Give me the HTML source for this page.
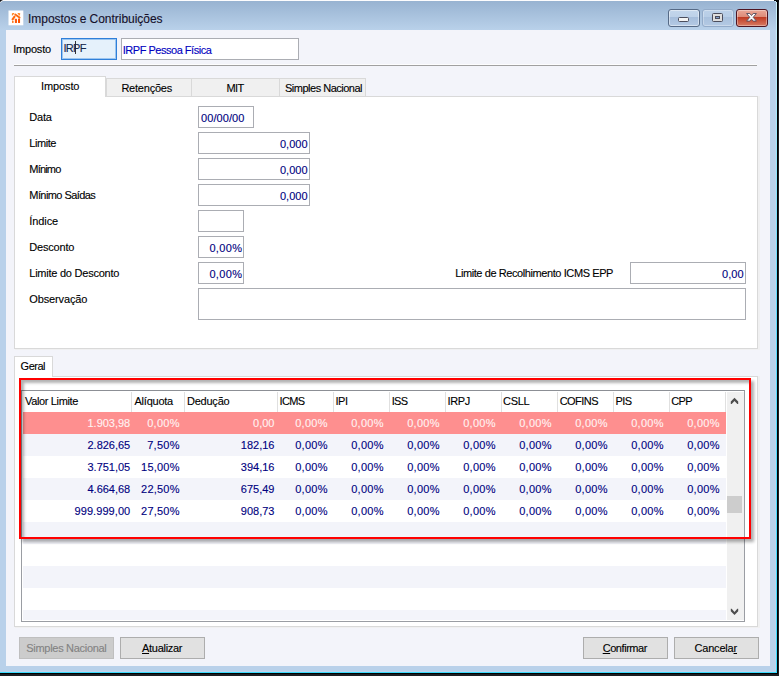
<!DOCTYPE html>
<html><head><meta charset="utf-8"><title>Impostos e Contribuições</title>
<style>
html,body{margin:0;padding:0;}
body{width:779px;height:676px;overflow:hidden;background:#1c1e22;position:relative;font-family:'Liberation Sans', sans-serif;}
.t{position:absolute;white-space:pre;font-family:'Liberation Sans', sans-serif;-webkit-text-stroke:0.12px;}
u{text-decoration:underline;}
</style></head><body>
<div style="position:absolute;left:0px;top:0px;width:777px;height:673px;background:#b9d1ea;"></div>
<div style="position:absolute;left:0px;top:1px;width:777px;height:29px;background:linear-gradient(#98b3d1,#b9d1ea);"></div>
<div style="position:absolute;left:0px;top:0px;width:777px;height:1px;background:#fdfdfe;"></div>
<div style="position:absolute;left:776px;top:1px;width:1px;height:672px;background:linear-gradient(#cdf1fb,#5cdcff 45%,#3adcff);"></div>
<div style="position:absolute;left:777px;top:0px;width:1px;height:674px;background:#000;"></div>
<div style="position:absolute;left:0px;top:673px;width:778px;height:1px;background:#000;"></div>
<div style="position:absolute;left:0px;top:672px;width:777px;height:1px;background:#3adcff;"></div>
<svg style="position:absolute;left:770px;top:0" width="9" height="4" viewBox="0 0 9 4" shape-rendering="crispEdges"><rect x="4" y="0" width="5" height="1" fill="#08080a"/><rect x="6" y="1" width="3" height="1" fill="#08080a"/><rect x="5" y="1" width="1" height="1" fill="#c8f2fc"/><rect x="4" y="1" width="1" height="1" fill="#a9c3df"/></svg>
<svg style="position:absolute;left:0;top:0" width="4" height="4" viewBox="0 0 4 4"><path d="M0 0 H3.2 Q0.6 0.6 0 2.4Z" fill="#141418"/><path d="M0 2.6 L2.6 0.9" stroke="#fff" stroke-width=".8" opacity=".8"/></svg>
<div style="position:absolute;left:775px;top:30px;width:1px;height:642px;background:#c2d3ea;"></div>
<div style="position:absolute;left:6px;top:671px;width:770px;height:1px;background:#c2d3ea;"></div>
<div style="position:absolute;left:6px;top:30px;width:764px;height:636px;background:#f3f4fa;"></div>
<svg style="position:absolute;left:8px;top:10px" width="16" height="16" viewBox="8 10 16 16"><defs><filter id="bl" x="-20%" y="-20%" width="140%" height="140%"><feGaussianBlur stdDeviation="0.28"/></filter></defs><rect x="8.5" y="10.5" width="14.8" height="14.8" fill="#fff"/><g filter="url(#bl)"><path d="M11.9 13.6 Q12 12.9 13 12.9 L14.1 12.9 L14.1 13.8 L12.6 15.5 L11.9 15.4Z" fill="#ff8628"/><path d="M17.7 12.9 L19.2 12.9 Q20 12.9 20.05 13.6 L20.05 15.4 L19.3 15.5 L17.7 13.8Z" fill="#ff8628"/><path d="M15.3 14.4 L19.5 17.6" stroke="#ff6a10" stroke-width="1.9" stroke-linecap="round"/><path d="M14.5 16.6 L12.6 19.3" stroke="#ff6a10" stroke-width="2.1" stroke-linecap="round"/><rect x="14.9" y="18.7" width="2.1" height="4.2" rx=".5" fill="#ff5a08"/><rect x="18.0" y="18.6" width="2.05" height="4.3" rx=".5" fill="#ff5200"/><rect x="12" y="21" width="1.6" height="1.9" fill="#ff7a20"/></g></svg>
<div style="position:absolute;left:668px;top:9px;width:32px;height:18px;box-sizing:border-box;border:1px solid #566a86;border-radius:3px;background:linear-gradient(#c3d6ec 0,#bdd1e8 44%,#a5bddb 45%,#b4cae4 100%);box-shadow:inset 0 0 0 1px rgba(255,255,255,.45);"><div style="position:absolute;left:9px;top:7px;width:11px;height:5px;box-sizing:border-box;border:1px solid #4b4d5c;border-radius:1.5px;background:#f4f4f4"></div></div>
<div style="position:absolute;left:702px;top:9px;width:32px;height:18px;box-sizing:border-box;border:1px solid #93abc9;border-radius:3px;background:linear-gradient(#bcd1e9 0,#b7cde6 44%,#a9c1de 45%,#b3c9e3 100%);box-shadow:inset 0 0 0 1px rgba(255,255,255,.3);"><div style="position:absolute;left:9px;top:3px;width:11px;height:9px;box-sizing:border-box;border:1px solid #4b4d5c;border-radius:1.5px;background:#dedede"><div style="position:absolute;left:2px;top:2px;width:5px;height:3px;box-sizing:border-box;border:1px solid #4b4d5c;background:#7f9dca"></div></div></div>
<div style="position:absolute;left:736px;top:9px;width:32px;height:18px;box-sizing:border-box;border:1px solid #4f1522;border-radius:3px;background:linear-gradient(#eaa797 0,#dc8a77 44%,#bf3a22 45%,#d77a63 100%);box-shadow:inset 0 0 0 1px rgba(255,255,255,.35);"><svg width="13" height="11" viewBox="0 0 13 11" style="position:absolute;left:8px;top:2px"><path d="M1.6 1.5 H4.8 L6.5 3.5 L8.2 1.5 H11.4 L8.2 5.3 L11.4 9.1 H8.2 L6.5 7.1 L4.8 9.1 H1.6 L4.8 5.3 Z" fill="#fafafa" stroke="#544c5c" stroke-width=".9" stroke-linejoin="round"/></svg></div>
<div style="position:absolute;left:61px;top:38px;width:56px;height:22px;box-sizing:border-box;border:1px solid #2f7fd9;background:#e5f1fb;box-shadow:inset 0 0 0 1px #9cc6f0;"></div>
<div style="position:absolute;left:75px;top:41px;width:1px;height:13px;background:#333;"></div>
<div style="position:absolute;left:121px;top:38px;width:178px;height:22px;box-sizing:border-box;border:1px solid #abadb3;background:#fff;"></div>
<div style="position:absolute;left:14px;top:65px;width:743px;height:1px;background:#a0a0a0;"></div>
<div style="position:absolute;left:14px;top:64px;width:743px;height:1px;background:#fdfdfe;"></div>
<div style="position:absolute;left:15px;top:96px;width:745px;height:254px;background:#f0f0f1;"></div>
<div style="position:absolute;left:15px;top:376px;width:745px;height:252px;background:#f0f0f1;"></div>
<div style="position:absolute;left:14px;top:96px;width:744px;height:253px;box-sizing:border-box;border:1px solid #d9d9d9;background:#fff;"></div>
<div style="position:absolute;left:106px;top:78px;width:260px;height:19px;box-sizing:border-box;border:1px solid #d9d9d9;background:#f0f0f0;"></div>
<div style="position:absolute;left:191px;top:79px;width:1px;height:17px;background:#d9d9d9;"></div>
<div style="position:absolute;left:279px;top:79px;width:1px;height:17px;background:#d9d9d9;"></div>
<div style="position:absolute;left:14px;top:76px;width:92px;height:21px;box-sizing:border-box;border:1px solid #d9d9d9;border-bottom:none;background:#fff;"></div>
<div style="position:absolute;left:198px;top:106px;width:56px;height:22px;box-sizing:border-box;border:1px solid #abadb3;background:#fff;"></div>
<div style="position:absolute;left:198px;top:132px;width:112px;height:22px;box-sizing:border-box;border:1px solid #abadb3;background:#fff;"></div>
<div style="position:absolute;left:198px;top:158px;width:112px;height:22px;box-sizing:border-box;border:1px solid #abadb3;background:#fff;"></div>
<div style="position:absolute;left:198px;top:184px;width:112px;height:22px;box-sizing:border-box;border:1px solid #abadb3;background:#fff;"></div>
<div style="position:absolute;left:198px;top:210px;width:46px;height:22px;box-sizing:border-box;border:1px solid #abadb3;background:#fff;"></div>
<div style="position:absolute;left:198px;top:236px;width:46px;height:22px;box-sizing:border-box;border:1px solid #abadb3;background:#fff;"></div>
<div style="position:absolute;left:198px;top:262px;width:46px;height:22px;box-sizing:border-box;border:1px solid #abadb3;background:#fff;"></div>
<div style="position:absolute;left:630px;top:262px;width:116px;height:22px;box-sizing:border-box;border:1px solid #abadb3;background:#fff;"></div>
<div style="position:absolute;left:198px;top:288px;width:548px;height:32px;box-sizing:border-box;border:1px solid #abadb3;background:#fff;"></div>
<div style="position:absolute;left:14px;top:376px;width:744px;height:251px;box-sizing:border-box;border:1px solid #d9d9d9;background:#fff;"></div>
<div style="position:absolute;left:14px;top:356px;width:39px;height:21px;box-sizing:border-box;border:1px solid #d9d9d9;border-bottom:none;background:#fff;"></div>
<div style="position:absolute;left:21px;top:390px;width:724px;height:232px;box-sizing:border-box;border:1px solid #9a9da3;border-top-color:#8c8f95;background:#fff;"></div>
<div style="position:absolute;left:23px;top:412px;width:703px;height:22px;background:#fe8f8f;"></div>
<div style="position:absolute;left:23px;top:434px;width:703px;height:22px;background:#f3f4fa;"></div>
<div style="position:absolute;left:23px;top:456px;width:703px;height:22px;background:#fff;"></div>
<div style="position:absolute;left:23px;top:478px;width:703px;height:22px;background:#f3f4fa;"></div>
<div style="position:absolute;left:23px;top:500px;width:703px;height:22px;background:#fff;"></div>
<div style="position:absolute;left:23px;top:522px;width:703px;height:22px;background:#f3f4fa;"></div>
<div style="position:absolute;left:23px;top:544px;width:703px;height:22px;background:#fff;"></div>
<div style="position:absolute;left:23px;top:566px;width:703px;height:22px;background:#f3f4fa;"></div>
<div style="position:absolute;left:23px;top:588px;width:703px;height:22px;background:#fff;"></div>
<div style="position:absolute;left:23px;top:610px;width:703px;height:10px;background:#f3f4fa;"></div>
<div style="position:absolute;left:131px;top:392px;width:1px;height:20px;background:#e0e0e0;"></div>
<div style="position:absolute;left:184px;top:392px;width:1px;height:20px;background:#e0e0e0;"></div>
<div style="position:absolute;left:277px;top:392px;width:1px;height:20px;background:#e0e0e0;"></div>
<div style="position:absolute;left:333px;top:392px;width:1px;height:20px;background:#e0e0e0;"></div>
<div style="position:absolute;left:389px;top:392px;width:1px;height:20px;background:#e0e0e0;"></div>
<div style="position:absolute;left:445px;top:392px;width:1px;height:20px;background:#e0e0e0;"></div>
<div style="position:absolute;left:501px;top:392px;width:1px;height:20px;background:#e0e0e0;"></div>
<div style="position:absolute;left:557px;top:392px;width:1px;height:20px;background:#e0e0e0;"></div>
<div style="position:absolute;left:613px;top:392px;width:1px;height:20px;background:#e0e0e0;"></div>
<div style="position:absolute;left:669px;top:392px;width:1px;height:20px;background:#e0e0e0;"></div>
<div style="position:absolute;left:725px;top:392px;width:1px;height:20px;background:#e0e0e0;"></div>
<div style="position:absolute;left:727px;top:392px;width:17px;height:228px;background:#f0f0f0;"></div>
<div style="position:absolute;left:727px;top:496px;width:15px;height:17px;background:#cdcdcd;"></div>
<svg style="position:absolute;left:730px;top:397px" width="10" height="8" viewBox="0 0 10 8"><path d="M0.8 4.6 L4.5 0.8 L8.2 4.6 L8.2 7 L7.3 7 L4.5 3.9 L1.7 7 L0.8 7 Z" fill="#4d4d4d"/></svg>
<svg style="position:absolute;left:730px;top:607px" width="10" height="9" viewBox="0 0 10 9"><path d="M0.8 4.2 L4.5 8 L8.2 4.2 L8.2 1.8 L7.3 1.8 L4.5 4.9 L1.7 1.8 L0.8 1.8 Z" fill="#4d4d4d"/></svg>
<div style="position:absolute;left:19px;top:378px;width:732px;height:161px;box-sizing:border-box;border:2px solid #ff0000;box-shadow:3px 3px 3px rgba(0,0,0,.32), inset 3px 3px 3px rgba(0,0,0,.30);"></div>
<div style="position:absolute;left:19px;top:637px;width:95px;height:22px;box-sizing:border-box;border:1px solid #bfbfbf;background:#cccccc;"></div>
<div style="position:absolute;left:120px;top:637px;width:85px;height:22px;box-sizing:border-box;border:1px solid #adadad;background:#e1e1e1;"></div>
<div style="position:absolute;left:583px;top:637px;width:85px;height:22px;box-sizing:border-box;border:1px solid #adadad;background:#e1e1e1;"></div>
<div style="position:absolute;left:674px;top:637px;width:85px;height:22px;box-sizing:border-box;border:1px solid #adadad;background:#e1e1e1;"></div>
<span class="t" style="left:28.00px;top:12px;color:#15102a;font-size:12px;line-height:14px;letter-spacing:-0.038px;">Impostos e Contribuições</span>
<span class="t" style="left:13.20px;top:43px;color:#000;font-size:11px;line-height:13px;letter-spacing:-0.192px;">Imposto</span>
<span class="t" style="left:63.40px;top:42px;color:#14264a;font-size:11px;line-height:13px;letter-spacing:-0.641px;">IRPF</span>
<span class="t" style="left:122.80px;top:44px;color:#0000c0;font-size:11px;line-height:13px;letter-spacing:-0.484px;">IRPF Pessoa Física</span>
<span class="t" style="left:41.00px;top:80px;color:#000;font-size:11px;line-height:13px;letter-spacing:-0.106px;">Imposto</span>
<span class="t" style="left:121.40px;top:82px;color:#000;font-size:11px;line-height:13px;letter-spacing:-0.222px;">Retenções</span>
<span class="t" style="left:226.50px;top:82px;color:#000;font-size:11px;line-height:13px;letter-spacing:-0.651px;">MIT</span>
<span class="t" style="left:285.00px;top:82px;color:#000;font-size:11px;line-height:13px;letter-spacing:-0.499px;">Simples Nacional</span>
<span class="t" style="left:29.30px;top:111px;color:#000;font-size:11px;line-height:13px;letter-spacing:-0.213px;">Data</span>
<span class="t" style="left:29.30px;top:137px;color:#000;font-size:11px;line-height:13px;letter-spacing:-0.457px;">Limite</span>
<span class="t" style="left:29.30px;top:163px;color:#000;font-size:11px;line-height:13px;letter-spacing:-0.810px;">Mínimo</span>
<span class="t" style="left:29.30px;top:189px;color:#000;font-size:11px;line-height:13px;letter-spacing:-0.575px;">Mínimo Saídas</span>
<span class="t" style="left:29.30px;top:215px;color:#000;font-size:11px;line-height:13px;letter-spacing:-0.093px;">Índice</span>
<span class="t" style="left:29.30px;top:241px;color:#000;font-size:11px;line-height:13px;letter-spacing:-0.186px;">Desconto</span>
<span class="t" style="left:29.30px;top:267px;color:#000;font-size:11px;line-height:13px;letter-spacing:-0.243px;">Limite do Desconto</span>
<span class="t" style="left:29.30px;top:293px;color:#000;font-size:11px;line-height:13px;letter-spacing:-0.131px;">Observação</span>
<span class="t" style="left:201.00px;top:112px;color:#000080;font-size:11px;line-height:13px;letter-spacing:0.084px;">00/00/00</span>
<span class="t" style="right:471.51px;top:138px;color:#000080;font-size:11px;line-height:13px;letter-spacing:-0.006px;">0,000</span>
<span class="t" style="right:471.51px;top:164px;color:#000080;font-size:11px;line-height:13px;letter-spacing:-0.006px;">0,000</span>
<span class="t" style="right:471.51px;top:190px;color:#000080;font-size:11px;line-height:13px;letter-spacing:-0.006px;">0,000</span>
<span class="t" style="right:536.64px;top:242px;color:#000080;font-size:11px;line-height:13px;letter-spacing:0.359px;">0,00%</span>
<span class="t" style="right:536.64px;top:268px;color:#000080;font-size:11px;line-height:13px;letter-spacing:0.359px;">0,00%</span>
<span class="t" style="left:455.20px;top:267px;color:#000;font-size:11px;line-height:13px;letter-spacing:-0.412px;">Limite de Recolhimento ICMS EPP</span>
<span class="t" style="right:35.48px;top:268px;color:#000080;font-size:11px;line-height:13px;letter-spacing:0.020px;">0,00</span>
<span class="t" style="left:20.60px;top:360px;color:#000;font-size:11px;line-height:13px;letter-spacing:-0.481px;">Geral</span>
<span class="t" style="left:25.00px;top:395px;color:#000;font-size:11px;line-height:13px;letter-spacing:-0.355px;">Valor Limite</span>
<span class="t" style="left:134.50px;top:395px;color:#000;font-size:11px;line-height:13px;letter-spacing:-0.234px;">Alíquota</span>
<span class="t" style="left:186.90px;top:395px;color:#000;font-size:11px;line-height:13px;letter-spacing:-0.207px;">Dedução</span>
<span class="t" style="left:279.50px;top:395px;color:#000;font-size:11px;line-height:13px;letter-spacing:-0.600px;">ICMS</span>
<span class="t" style="left:335.60px;top:395px;color:#000;font-size:11px;line-height:13px;letter-spacing:-0.551px;">IPI</span>
<span class="t" style="left:391.70px;top:395px;color:#000;font-size:11px;line-height:13px;letter-spacing:-0.678px;">ISS</span>
<span class="t" style="left:447.50px;top:395px;color:#000;font-size:11px;line-height:13px;letter-spacing:-0.336px;">IRPJ</span>
<span class="t" style="left:503.00px;top:395px;color:#000;font-size:11px;line-height:13px;letter-spacing:-0.258px;">CSLL</span>
<span class="t" style="left:559.70px;top:395px;color:#000;font-size:11px;line-height:13px;letter-spacing:-0.544px;">COFINS</span>
<span class="t" style="left:615.50px;top:395px;color:#000;font-size:11px;line-height:13px;letter-spacing:-0.578px;">PIS</span>
<span class="t" style="left:671.30px;top:395px;color:#000;font-size:11px;line-height:13px;letter-spacing:-0.675px;">CPP</span>
<span class="t" style="right:648.82px;top:417px;color:#fff2f2;font-size:11px;line-height:13px;letter-spacing:-0.016px;">1.903,98</span>
<span class="t" style="right:599.22px;top:417px;color:#fff2f2;font-size:11px;line-height:13px;letter-spacing:0.279px;">0,00%</span>
<span class="t" style="right:504.50px;top:417px;color:#fff2f2;font-size:11px;line-height:13px;letter-spacing:0.000px;">0,00</span>
<span class="t" style="right:451.22px;top:417px;color:#fff2f2;font-size:11px;line-height:13px;letter-spacing:0.279px;">0,00%</span>
<span class="t" style="right:395.22px;top:417px;color:#fff2f2;font-size:11px;line-height:13px;letter-spacing:0.279px;">0,00%</span>
<span class="t" style="right:339.22px;top:417px;color:#fff2f2;font-size:11px;line-height:13px;letter-spacing:0.279px;">0,00%</span>
<span class="t" style="right:283.22px;top:417px;color:#fff2f2;font-size:11px;line-height:13px;letter-spacing:0.279px;">0,00%</span>
<span class="t" style="right:227.22px;top:417px;color:#fff2f2;font-size:11px;line-height:13px;letter-spacing:0.279px;">0,00%</span>
<span class="t" style="right:171.22px;top:417px;color:#fff2f2;font-size:11px;line-height:13px;letter-spacing:0.279px;">0,00%</span>
<span class="t" style="right:115.22px;top:417px;color:#fff2f2;font-size:11px;line-height:13px;letter-spacing:0.279px;">0,00%</span>
<span class="t" style="right:59.22px;top:417px;color:#fff2f2;font-size:11px;line-height:13px;letter-spacing:0.279px;">0,00%</span>
<span class="t" style="right:648.82px;top:439px;color:#000080;font-size:11px;line-height:13px;letter-spacing:-0.016px;">2.826,65</span>
<span class="t" style="right:599.22px;top:439px;color:#000080;font-size:11px;line-height:13px;letter-spacing:0.279px;">7,50%</span>
<span class="t" style="right:504.50px;top:439px;color:#000080;font-size:11px;line-height:13px;letter-spacing:0.000px;">182,16</span>
<span class="t" style="right:451.22px;top:439px;color:#000080;font-size:11px;line-height:13px;letter-spacing:0.279px;">0,00%</span>
<span class="t" style="right:395.22px;top:439px;color:#000080;font-size:11px;line-height:13px;letter-spacing:0.279px;">0,00%</span>
<span class="t" style="right:339.22px;top:439px;color:#000080;font-size:11px;line-height:13px;letter-spacing:0.279px;">0,00%</span>
<span class="t" style="right:283.22px;top:439px;color:#000080;font-size:11px;line-height:13px;letter-spacing:0.279px;">0,00%</span>
<span class="t" style="right:227.22px;top:439px;color:#000080;font-size:11px;line-height:13px;letter-spacing:0.279px;">0,00%</span>
<span class="t" style="right:171.22px;top:439px;color:#000080;font-size:11px;line-height:13px;letter-spacing:0.279px;">0,00%</span>
<span class="t" style="right:115.22px;top:439px;color:#000080;font-size:11px;line-height:13px;letter-spacing:0.279px;">0,00%</span>
<span class="t" style="right:59.22px;top:439px;color:#000080;font-size:11px;line-height:13px;letter-spacing:0.279px;">0,00%</span>
<span class="t" style="right:648.82px;top:461px;color:#000080;font-size:11px;line-height:13px;letter-spacing:-0.016px;">3.751,05</span>
<span class="t" style="right:599.27px;top:461px;color:#000080;font-size:11px;line-height:13px;letter-spacing:0.231px;">15,00%</span>
<span class="t" style="right:504.50px;top:461px;color:#000080;font-size:11px;line-height:13px;letter-spacing:0.000px;">394,16</span>
<span class="t" style="right:451.22px;top:461px;color:#000080;font-size:11px;line-height:13px;letter-spacing:0.279px;">0,00%</span>
<span class="t" style="right:395.22px;top:461px;color:#000080;font-size:11px;line-height:13px;letter-spacing:0.279px;">0,00%</span>
<span class="t" style="right:339.22px;top:461px;color:#000080;font-size:11px;line-height:13px;letter-spacing:0.279px;">0,00%</span>
<span class="t" style="right:283.22px;top:461px;color:#000080;font-size:11px;line-height:13px;letter-spacing:0.279px;">0,00%</span>
<span class="t" style="right:227.22px;top:461px;color:#000080;font-size:11px;line-height:13px;letter-spacing:0.279px;">0,00%</span>
<span class="t" style="right:171.22px;top:461px;color:#000080;font-size:11px;line-height:13px;letter-spacing:0.279px;">0,00%</span>
<span class="t" style="right:115.22px;top:461px;color:#000080;font-size:11px;line-height:13px;letter-spacing:0.279px;">0,00%</span>
<span class="t" style="right:59.22px;top:461px;color:#000080;font-size:11px;line-height:13px;letter-spacing:0.279px;">0,00%</span>
<span class="t" style="right:648.82px;top:483px;color:#000080;font-size:11px;line-height:13px;letter-spacing:-0.016px;">4.664,68</span>
<span class="t" style="right:599.27px;top:483px;color:#000080;font-size:11px;line-height:13px;letter-spacing:0.231px;">22,50%</span>
<span class="t" style="right:504.50px;top:483px;color:#000080;font-size:11px;line-height:13px;letter-spacing:0.000px;">675,49</span>
<span class="t" style="right:451.22px;top:483px;color:#000080;font-size:11px;line-height:13px;letter-spacing:0.279px;">0,00%</span>
<span class="t" style="right:395.22px;top:483px;color:#000080;font-size:11px;line-height:13px;letter-spacing:0.279px;">0,00%</span>
<span class="t" style="right:339.22px;top:483px;color:#000080;font-size:11px;line-height:13px;letter-spacing:0.279px;">0,00%</span>
<span class="t" style="right:283.22px;top:483px;color:#000080;font-size:11px;line-height:13px;letter-spacing:0.279px;">0,00%</span>
<span class="t" style="right:227.22px;top:483px;color:#000080;font-size:11px;line-height:13px;letter-spacing:0.279px;">0,00%</span>
<span class="t" style="right:171.22px;top:483px;color:#000080;font-size:11px;line-height:13px;letter-spacing:0.279px;">0,00%</span>
<span class="t" style="right:115.22px;top:483px;color:#000080;font-size:11px;line-height:13px;letter-spacing:0.279px;">0,00%</span>
<span class="t" style="right:59.22px;top:483px;color:#000080;font-size:11px;line-height:13px;letter-spacing:0.279px;">0,00%</span>
<span class="t" style="right:648.74px;top:505px;color:#000080;font-size:11px;line-height:13px;letter-spacing:0.064px;">999.999,00</span>
<span class="t" style="right:599.27px;top:505px;color:#000080;font-size:11px;line-height:13px;letter-spacing:0.231px;">27,50%</span>
<span class="t" style="right:504.50px;top:505px;color:#000080;font-size:11px;line-height:13px;letter-spacing:0.000px;">908,73</span>
<span class="t" style="right:451.22px;top:505px;color:#000080;font-size:11px;line-height:13px;letter-spacing:0.279px;">0,00%</span>
<span class="t" style="right:395.22px;top:505px;color:#000080;font-size:11px;line-height:13px;letter-spacing:0.279px;">0,00%</span>
<span class="t" style="right:339.22px;top:505px;color:#000080;font-size:11px;line-height:13px;letter-spacing:0.279px;">0,00%</span>
<span class="t" style="right:283.22px;top:505px;color:#000080;font-size:11px;line-height:13px;letter-spacing:0.279px;">0,00%</span>
<span class="t" style="right:227.22px;top:505px;color:#000080;font-size:11px;line-height:13px;letter-spacing:0.279px;">0,00%</span>
<span class="t" style="right:171.22px;top:505px;color:#000080;font-size:11px;line-height:13px;letter-spacing:0.279px;">0,00%</span>
<span class="t" style="right:115.22px;top:505px;color:#000080;font-size:11px;line-height:13px;letter-spacing:0.279px;">0,00%</span>
<span class="t" style="right:59.22px;top:505px;color:#000080;font-size:11px;line-height:13px;letter-spacing:0.279px;">0,00%</span>
<span class="t" style="left:26.30px;top:642px;color:#838383;font-size:11px;line-height:13px;letter-spacing:-0.299px;">Simples Nacional</span>
<span class="t" style="left:142.00px;top:642px;color:#000;font-size:11px;line-height:13px;letter-spacing:-0.289px;"><u>A</u>tualizar</span>
<span class="t" style="left:602.70px;top:642px;color:#000;font-size:11px;line-height:13px;letter-spacing:-0.444px;"><u>C</u>onfirmar</span>
<span class="t" style="left:694.50px;top:642px;color:#000;font-size:11px;line-height:13px;letter-spacing:-0.191px;">Cancela<u>r</u></span>
</body></html>
